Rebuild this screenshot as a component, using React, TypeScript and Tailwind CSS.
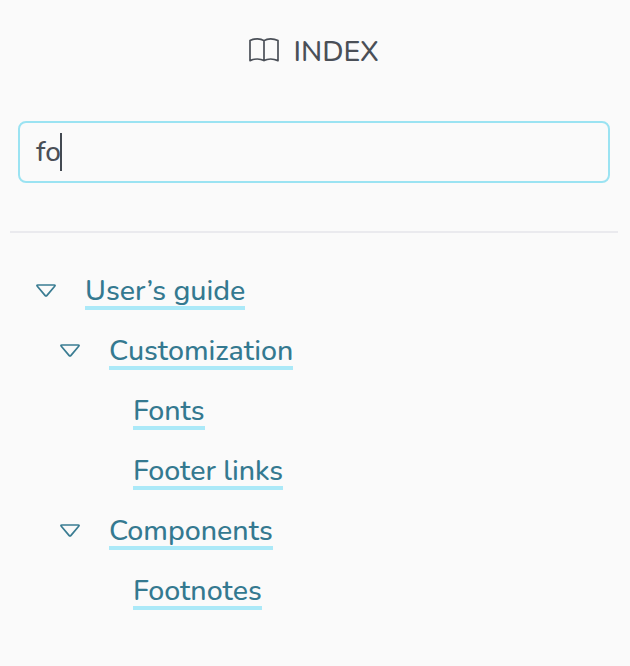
import React from "react";

type Entry = { label: string; level: number; open?: boolean };

const entries: Entry[] = [
  { label: "User’s guide", level: 0, open: true },
  { label: "Customization", level: 1, open: true },
  { label: "Fonts", level: 2 },
  { label: "Footer links", level: 2 },
  { label: "Components", level: 1, open: true },
  { label: "Footnotes", level: 2 },
];

const indents = ["pl-[35px]", "pl-[59px]", "pl-[83px]"];

function Triangle() {
  return (
    <svg width="22" height="16" viewBox="0 0 22 16" fill="none" stroke="#3a7c92" strokeWidth="1.7" strokeLinejoin="round">
      <path d="M2.8 2H19.2Q20.7 2 19.7 3.2L12 12.4Q11 13.6 10 12.4L2.3 3.2Q1.3 2 2.8 2Z" />
    </svg>
  );
}

export default function App() {
  return (
    <div className="h-[666px] w-[630px] bg-[#fafafa] font-['Nunito','Nunito_Sans','Open_Sans',sans-serif] text-[28.6px] font-medium text-[#4a4f57]">
      <header className="flex h-[121px] items-start justify-start pl-[248px] pt-[33px]">
        <svg className="mt-[4px]" width="32" height="27" viewBox="0 0 32 27" fill="none" stroke="currentColor" strokeWidth="1.7" strokeLinejoin="round" strokeLinecap="round">
          <path d="M16 3.6C12.5 1.2 6.5 1.2 2 3.6V23.6C6.5 21.6 12.5 21.6 16 23.6C19.5 21.6 25.5 21.6 30 23.6V3.6C25.5 1.2 19.5 1.2 16 3.6V23.6" />
        </svg>
        <h1 className="ml-[13.5px] leading-[38px]">INDEX</h1>
      </header>
      <div className="ml-[18px] flex h-[62px] w-[592px] items-center rounded-[8px] border-2 border-[#9be3f2] pl-[16px]">
        <span className="text-[28px]">fo</span>
        <span className="-ml-px h-[38px] w-[2px] bg-[#434951]" />
      </div>
      <hr className="ml-[10px] mt-[48px] w-[608px] border-t-2 border-[#eaeaee]" />
      <nav className="pt-[28px]">
        {entries.map((e) => (
          <div key={e.label} className={`flex h-[60px] items-center ${indents[e.level]}`}>
            <span className="w-[50px]">{e.open && <Triangle />}</span>
            <a className="h-[38px] border-b-4 border-[#abe9f8] leading-[38px] text-[#347990]">{e.label}</a>
          </div>
        ))}
      </nav>
    </div>
  );
}
